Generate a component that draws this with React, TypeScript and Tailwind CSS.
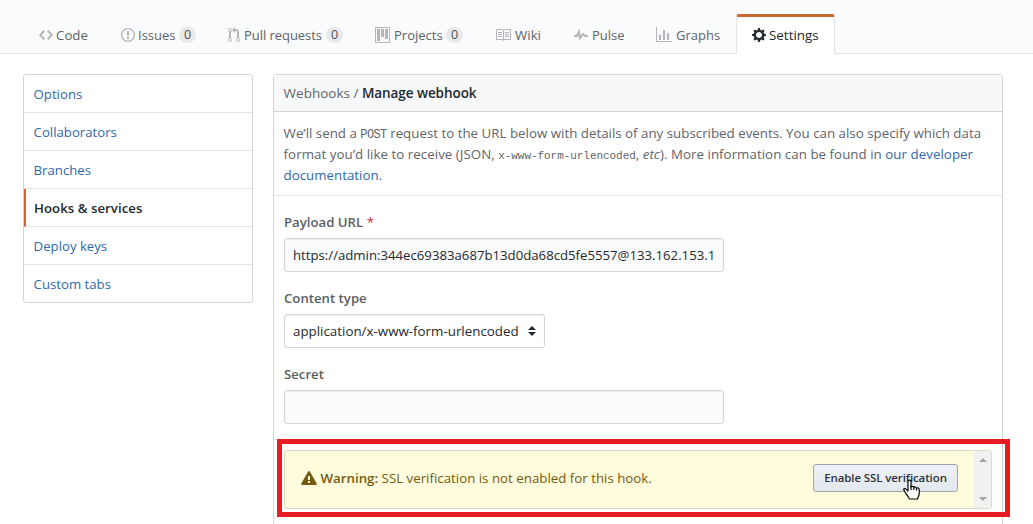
import React from "react";

const icons = {
  code: { w: 14, d: "M9.5 3L8 4.5 11.5 8 8 11.5 9.5 13 14 8 9.5 3zm-5 0L0 8l4.5 5L6 11.5 2.5 8 6 4.5 4.5 3z" },
  issue: { w: 14, d: "M7 2.3c3.14 0 5.7 2.56 5.7 5.7s-2.56 5.7-5.7 5.7A5.71 5.71 0 0 1 1.3 8c0-3.14 2.56-5.7 5.7-5.7zM7 1C3.14 1 0 4.14 0 8s3.14 7 7 7 7-3.14 7-7-3.14-7-7-7zm1 3H6v5h2V4zm0 6H6v2h2v-2z" },
  pull: { w: 12, d: "M11 11.28V5c-.03-.78-.34-1.47-.94-2.06C9.46 2.35 8.78 2.03 8 2H7V0L4 3l3 3V4h1c.27.02.48.11.69.31.21.2.3.42.31.69v6.28A1.993 1.993 0 0 0 10 15a1.993 1.993 0 0 0 1-3.72zm-1 2.92c-.66 0-1.2-.55-1.2-1.2 0-.65.55-1.2 1.2-1.2.65 0 1.2.55 1.2 1.2 0 .65-.55 1.2-1.2 1.2zM4 3c0-1.11-.89-2-2-2a1.993 1.993 0 0 0-1 3.72v6.56A1.993 1.993 0 0 0 2 15a1.993 1.993 0 0 0 1-3.72V4.72c.59-.34 1-.98 1-1.72zm-.8 10c0 .66-.55 1.2-1.2 1.2-.65 0-1.2-.55-1.2-1.2 0-.65.55-1.2 1.2-1.2.65 0 1.2.55 1.2 1.2zM2 4.2C1.34 4.2.8 3.65.8 3c0-.65.55-1.2 1.2-1.2.65 0 1.2.55 1.2 1.2 0 .65-.55 1.2-1.2 1.2z" },
  project: { w: 15, d: "M10 12h3V2h-3v10zm-4-2h3V2H6v8zm-4 4h3V2H2v12zm-1 1h13V1H1v14zM14 0H1a1 1 0 0 0-1 1v14a1 1 0 0 0 1 1h13a1 1 0 0 0 1-1V1a1 1 0 0 0-1-1z" },
  book: { w: 16, d: "M3 5h4v1H3V5zm0 3h4V7H3v1zm0 2h4V9H3v1zm11-5h-4v1h4V5zm0 2h-4v1h4V7zm0 2h-4v1h4V9zm2-6v9c0 .55-.45 1-1 1H9.5l-1 1-1-1H2c-.55 0-1-.45-1-1V3c0-.55.45-1 1-1h5.5l1 1 1-1H15c.55 0 1 .45 1 1zm-8 .5L7.5 3H2v9h6V3.5zm7-.5H9.5l-.5.5V12h6V3z" },
  pulse: { w: 14, d: "M11.5 8L8.8 5.4 6.6 8.5 5.5 1.6 2.38 8H0v2h3.6l.9-1.8.9 5.4L9 8.5l1.6 1.5H14V8h-2.5z" },
  graph: { w: 16, d: "M16 14v1H0V0h1v14h15zM5 13H3V8h2v5zm4 0H7V3h2v10zm4 0h-2V6h2v7z" },
  gear: { w: 14, d: "M14 8.77v-1.6l-1.94-.64-.45-1.09.88-1.84-1.13-1.13-1.81.91-1.09-.45-.69-1.92h-1.6l-.63 1.94-1.11.45-1.84-.88-1.13 1.13.91 1.81-.45 1.09L0 7.23v1.59l1.94.64.45 1.09-.88 1.84 1.13 1.13 1.81-.91 1.09.45.69 1.92h1.59l.63-1.94 1.11-.45 1.84.88 1.13-1.13-.92-1.81.47-1.09L14 8.75v.02zM7 11c-1.66 0-3-1.34-3-3s1.34-3 3-3 3 1.34 3 3-1.34 3-3 3z" },
  alert: { w: 16, d: "M8.865 1.52c-.18-.31-.51-.5-.87-.5s-.69.19-.87.5L.275 13.5c-.18.31-.18.69 0 1 .19.31.52.5.87.5h13.7c.36 0 .69-.19.86-.5.17-.31.18-.69.01-1L8.865 1.52zM8.995 13h-2v-2h2v2zm0-3h-2V6h2v4z" },
};

function Octicon({ name, className }: { name: keyof typeof icons; className?: string }) {
  const { w, d } = icons[name];
  return (
    <svg width={w} height={16} viewBox={`0 0 ${w} 16`} className={`shrink-0 ${className ?? ""}`} fill="currentColor">
      <path fillRule="evenodd" d={d} />
    </svg>
  );
}

type Tab = { icon: keyof typeof icons; label: string; box: string; gap: string; text: string; count?: number };

const tabs: Tab[] = [
  { icon: "code", label: "Code", box: "w-[82px]", gap: "gap-[3px]", text: "w-8 text-[13.3px]" },
  { icon: "issue", label: "Issues", box: "w-[107px]", gap: "gap-[3px]", text: "w-[42px]", count: 0 },
  { icon: "pull", label: "Pull requests", box: "w-[147px]", gap: "gap-1", text: "w-[82px] tracking-[-0.05px]", count: 0 },
  { icon: "project", label: "Projects", box: "w-[120px]", gap: "gap-1", text: "w-[52px]", count: 0 },
  { icon: "book", label: "Wiki", box: "w-[79px]", gap: "gap-1", text: "w-7 text-[13.3px]" },
  { icon: "pulse", label: "Pulse", box: "w-[82px]", gap: "gap-1", text: "w-8" },
  { icon: "graph", label: "Graphs", box: "w-[80px]", gap: "gap-1", text: "w-11" },
];

function Nav() {
  return (
    <header className="flex h-[54px] items-end border-b border-[#e1e4e8] bg-[#fafbfc] pl-[39px]">
      {tabs.map((t) => (
        <div key={t.label} className={`flex h-9 items-center text-[#5f6469] ${t.box} ${t.gap}`}>
          <Octicon name={t.icon} className="text-[#b3b5b8]" />
          <span className={`whitespace-nowrap ${t.text}`}>{t.label}</span>
          {t.count !== undefined && (
            <span className="-ml-1 flex h-4 w-[17px] shrink-0 items-center justify-center rounded-full bg-[#e8e9eb] text-[12.5px] text-[#4c5156]">
              {t.count}
            </span>
          )}
        </div>
      ))}
      <div className="-mb-px flex h-10 w-[99px] items-center gap-[3px] rounded-t-[3px] border-x border-t-[3px] border-x-[#e1e4e8] border-t-[#c9692f] bg-white pb-0.5 pl-[15px] text-[#24292e]">
        <Octicon name="gear" />
        <span className="whitespace-nowrap text-[13.4px]">Settings</span>
      </div>
    </header>
  );
}

const menu = ["Options", "Collaborators", "Branches", "Hooks & services", "Deploy keys", "Custom tabs"];

function Sidebar() {
  return (
    <nav className="h-[229px] w-[230px] shrink-0 overflow-hidden rounded-[3px] border border-[#d1d5da] text-[13.2px]">
      {menu.map((m) => (
        <div
          key={m}
          className={`flex h-[38px] items-center border-b border-b-[#e1e4e8] ${
            m === "Hooks & services"
              ? "border-l-2 border-l-[#c9692f] pl-2 font-semibold tracking-[0.05px] text-[#24292e]"
              : "pl-[9.6px] text-[#2f69ad]"
          }`}
        >
          {m}
        </div>
      ))}
    </nav>
  );
}

function Label({ children }: { children: React.ReactNode }) {
  return <div className="h-[21px] text-[13.2px] font-semibold leading-[21px] text-[#5a5f64]">{children}</div>;
}

const fieldClass =
  "mt-[5px] flex h-[34px] items-center whitespace-nowrap rounded-[3px] border border-[#d1d5da] px-2 text-[#24292e] shadow-[inset_0_1px_2px_rgba(27,31,35,0.07)]";

function Hand() {
  return (
    <svg width="18" height="24" viewBox="0 0 18 24" className="absolute left-[89px] top-[14px]">
      <path
        d="M5 2.2C5 .7 8 .7 8 2.2V8c.2-1 2.6-1 2.8.5.5-1 2.5-.7 2.7.8.7-.8 2.7-.3 2.7 1.2v4.2c0 2-1.4 3.400-1.600 5.300H6.300C5.800 17.500 3.400 15.800 2.300 13.500 1.500 12 .6 11 .7 10.200c.8-1.200 2.600-.5 4.300 1.900z"
        fill="#fff"
        stroke="#000"
        strokeWidth="1.2"
        strokeLinejoin="round"
      />
      <path d="M8 7v4M10.8 8.500V11M13.500 9.500v2" stroke="#000" strokeWidth="1.2" />
    </svg>
  );
}

function Warning() {
  return (
    <div className="-mx-[7px] -mt-px h-[78px] w-[733px] border-[5px] border-[#e81c24] px-0.5 pt-1.5">
      <div className="flex h-[59px] w-[708px] overflow-hidden rounded-[3px] border border-[#dcdac2] bg-[#fffbdd] text-[#735c0f]">
        <div className="flex flex-1 items-center pb-[3px] pl-4">
          <Octicon name="alert" className="mr-[3.5px]" />
          <span className="whitespace-nowrap text-[13.3px]">
            <b className="font-semibold">Warning:</b> SSL verification is not enabled for this hook.
          </span>
          <button className="relative ml-auto mr-4 h-7 w-[145px] whitespace-nowrap rounded-[3px] border border-[#a1a5ab] bg-linear-to-b from-[#eef1f6] to-[#e3e8ee] text-[11.5px] font-semibold tracking-[-0.1px] text-[#30353a]">
            Enable SSL verification
            <Hand />
          </button>
        </div>
        <div className="flex w-[17px] flex-col items-center justify-between bg-[#f1f1f1] pb-[7px] pt-[7px]">
          <svg width="8" height="4" viewBox="0 0 8 4"><path d="M0 4L4 0l4 4z" fill="#a3a3a3" /></svg>
          <svg width="8" height="4" viewBox="0 0 8 4"><path d="M0 0h8L4 4z" fill="#a3a3a3" /></svg>
        </div>
      </div>
    </div>
  );
}

function Panel() {
  return (
    <main className="h-[480px] w-[730px] shrink-0 rounded-[3px] border border-[#d1d5da]">
      <div className="flex h-[37px] items-center whitespace-pre border-b border-[#d1d5da] bg-[#f6f8fa] pl-[9.6px] text-[13.5px] text-[#5f6469]">
        Webhooks / <b className="font-semibold tracking-[-0.06px] text-[#24292e]">Manage webhook</b>
      </div>
      <div className="h-[84px] whitespace-nowrap border-b border-[#e1e4e8] pl-[9.6px] pt-[11px] text-[13.3px] leading-[21px] text-[#5f6469]">
        <div className="h-[21px] tracking-[0.012px]">
          We’ll send a{" "}
          <code className="font-['Liberation_Mono',monospace] text-[12px] leading-none tracking-[-0.6px]">POST</code>{" "}
          request to the URL below with details of any subscribed events. You can also specify which data
        </div>
        <div className="h-[21px] tracking-[0.045px]">
          format you’d like to receive (JSON,{" "}
          <code className="font-['Liberation_Mono',monospace] text-[11px] leading-none tracking-[-0.05px]">
            x-www-form-urlencoded
          </code>
          , <i>etc</i>). More information can be found in <span className="text-[#2f69ad]">our developer</span>
        </div>
        <div className="h-[21px] text-[#2f69ad]">documentation.</div>
      </div>
      <div className="h-[244px] border-b border-[#e1e4e8] px-2.5 pt-4">
        <Label>
          Payload URL <span className="text-[#cb4650]">*</span>
        </Label>
        <div className={`${fieldClass} w-[440px] bg-[#fafbfc] text-[13.2px]`}>
          https://admin:344ec69383a687b13d0da68cd5fe5557@133.162.153.1
        </div>
        <div className="h-4" />
        <Label>Content type</Label>
        <div className={`${fieldClass} w-[261px] justify-between bg-white text-[13.35px]`}>
          <span>application/x-www-form-urlencoded</span>
          <svg width="8" height="10" viewBox="0 0 8 10" fill="#24292e"><path d="M0 4L4 0l4 4zM0 6h8L4 10z" /></svg>
        </div>
        <div className="h-4" />
        <Label>Secret</Label>
        <div className={`${fieldClass} w-[440px] bg-[#fafbfc]`} />
      </div>
      <div className="pl-2.5">
        <Warning />
      </div>
    </main>
  );
}

export default function App() {
  return (
    <div className="h-[524px] w-[1033px] overflow-hidden bg-white font-['Open_Sans',sans-serif] text-[13px] leading-5">
      <Nav />
      <div className="flex gap-5 pl-[23px] pt-5">
        <Sidebar />
        <Panel />
      </div>
    </div>
  );
}
